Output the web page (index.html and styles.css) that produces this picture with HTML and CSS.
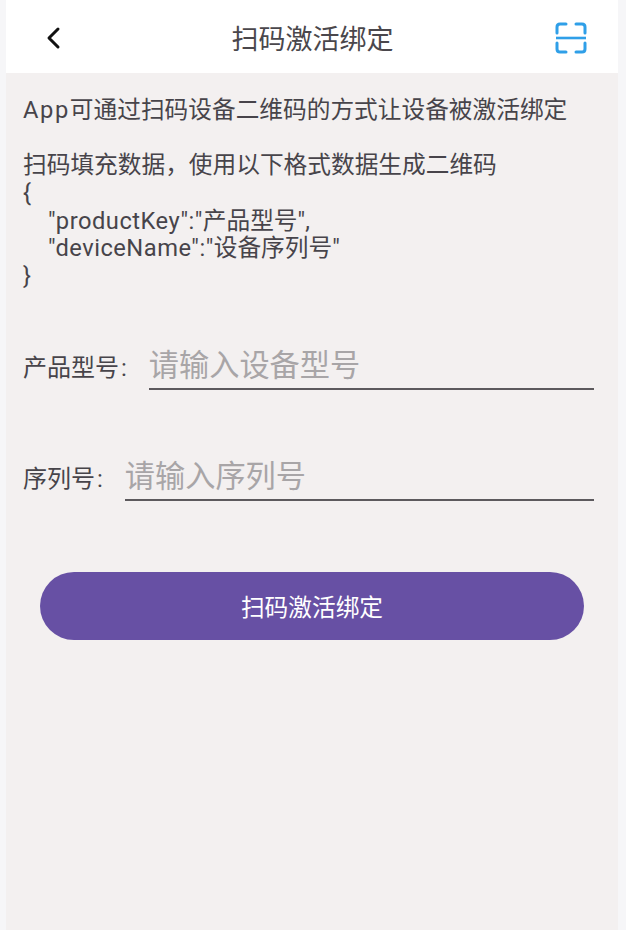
FILE: index.html
```html
<!DOCTYPE html>
<html lang="zh-CN">
<head>
    <meta charset="UTF-8">
    <meta name="viewport" content="width=device-width, initial-scale=1.0">
    <title>扫码激活绑定</title>
    <link rel="stylesheet" href="styles.css">
</head>
<body>

<div class="page">
    <header class="topbar">
        <svg class="back-icon" width="16" height="24" viewBox="0 0 16 24">
            <path d="M13 3 L4 12 L13 21" fill="none" stroke="#111" stroke-width="3" stroke-linecap="round" stroke-linejoin="round"/>
        </svg>
        <div class="topbar-title">扫码激活绑定</div>
        <svg class="scan-icon" width="32" height="32" viewBox="0 0 32 32">
            <path d="M2 11 V5 Q2 2 5 2 H11 M21 2 H27 Q30 2 30 5 V11 M30 21 V27 Q30 30 27 30 H21 M11 30 H5 Q2 30 2 27 V21" fill="none" stroke="#2f9fe8" stroke-width="3" stroke-linecap="round"/>
            <path d="M1 16 H31" fill="none" stroke="#2f9fe8" stroke-width="2.6"/>
        </svg>
    </header>

    <div class="content">
        <p class="intro"><span class="latin-app">App</span>可通过扫码设备二维码的方式让设备被激活绑定</p>
        <div class="format">
            <div>扫码填充数据，使用以下格式数据生成二维码</div>
            <div>{</div>
            <div class="indent"><span class="latin">"productKey":"</span>产品型号",</div>
            <div class="indent"><span class="latin">"deviceName":"</span>设备序列号"</div>
            <div>}</div>
        </div>

        <div class="field field-first">
            <label class="field-label" for="productKey">产品型号<span class="colon">:</span></label>
            <input class="field-input" type="text" id="productKey" placeholder="请输入设备型号">
        </div>
        <div class="field field-second">
            <label class="field-label" for="deviceName">序列号<span class="colon">:</span></label>
            <input class="field-input" type="text" id="deviceName" placeholder="请输入序列号">
        </div>

        <button class="submit-btn">扫码激活绑定</button>
    </div>
</div>

</body>
</html>
```

FILE: styles.css
```css
html, body {
    height: 100%;
}
body {
    margin: 0;
    background-color: #f6f6f8;
    font-family: 'Roboto', 'Noto Sans CJK SC', sans-serif;
    color: #47444a;
}
.page {
    display: flex;
    flex-direction: column;
    height: 930px;
    margin-left: 6px;
    width: 612px;
    overflow: hidden;
}
.topbar {
    display: flex;
    align-items: center;
    justify-content: space-between;
    height: 73px;
    flex-shrink: 0;
    background-color: white;
    padding: 3px 31px 0 39px;
    box-sizing: border-box;
}
.topbar-title {
    font-size: 27px;
    line-height: 40px;
    color: #4a474c;
    margin: 3px 0 0 9px;
}
.content {
    flex: 1;
    background-color: #f3f0f0;
    padding: 0 24px 0 17px;
}
.intro {
    margin: 23px 0 0;
    font-size: 23.7px;
    line-height: 28px;
    white-space: nowrap;
}
.latin-app {
    letter-spacing: 1.6px;
}
.format {
    margin-top: 28px;
    font-size: 23.7px;
    line-height: 27.8px;
}
.indent {
    padding-left: 25px;
}
.latin {
    letter-spacing: 0.5px;
}
.field {
    display: flex;
    align-items: flex-end;
    height: 50px;
}
.field-first {
    margin-top: 49px;
}
.field-second {
    margin-top: 61px;
}
.field-label {
    font-size: 24px;
    line-height: 36px;
    padding-bottom: 4px;
    white-space: nowrap;
    margin-right: 22px;
}
.colon {
    margin-left: 2px;
}
.field-input {
    flex: 1;
    min-width: 0;
    height: 50px;
    box-sizing: border-box;
    padding: 4px 0 0 0;
    border: none;
    border-bottom: 2px solid #5c595d;
    background: transparent;
    font-family: inherit;
    font-size: 30.2px;
    color: #47444a;
    outline: none;
}
.field-input::placeholder {
    color: #a8a5a7;
    opacity: 1;
}
.submit-btn {
    display: block;
    width: 544px;
    height: 68px;
    margin: 71px 0 0 17px;
    border: none;
    border-radius: 34px;
    background-color: #6750a4;
    color: white;
    font-family: inherit;
    font-size: 23.7px;
}
```
